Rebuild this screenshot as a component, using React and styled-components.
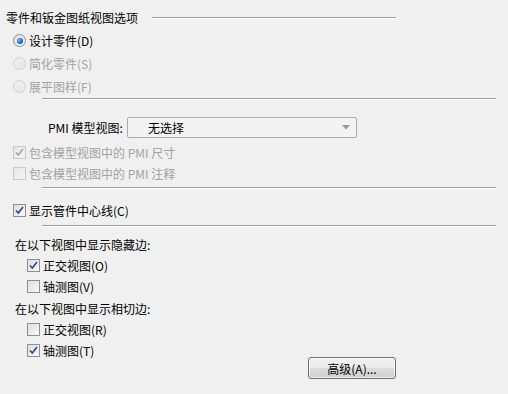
import React from "react";
import styled, { createGlobalStyle } from "styled-components";

const Global = createGlobalStyle`
  html, body {
    margin: 0;
    padding: 0;
    background: #f0f0f0;
  }
  body {
    font-family: "Noto Sans CJK SC", "Noto Sans", sans-serif;
    font-size: 12px;
    color: #000;
  }
`;

const Panel = styled.div`
  width: 508px;
  height: 394px;
  padding-top: 7px;
  box-sizing: border-box;
  display: flex;
  flex-direction: column;
  overflow: hidden;
`;

const TitleRow = styled.div`
  height: 20px;
  display: flex;
  align-items: center;
  padding-left: 6px;
  margin-bottom: 2px;
`;

const TitleLine = styled.div`
  width: 244px;
  margin-left: 14px;
  height: 1px;
  margin-top: 1px;
  background: #a0a0a0;
  border-bottom: 1px solid #fff;
`;

const Separator = styled.div`
  height: 1px;
  margin: ${(p) => p.$mt || 0}px 0 0 42px;
  width: 454px;
  background: #a0a0a0;
  border-bottom: 1px solid #fff;
`;

const Row = styled.label`
  display: flex;
  align-items: center;
  height: ${(p) => p.$h || 21}px;
  margin-top: ${(p) => p.$mt || 0}px;
  padding-left: ${(p) => p.$indent || 13}px;
  color: ${(p) => (p.$disabled ? "#a3a3a3" : "#000")};
  white-space: nowrap;
`;

const Caption = styled.span`
  margin-left: 3px;
`;

const RadioDot = styled.span`
  width: 11px;
  height: 11px;
  border-radius: 50%;
  border: 1px solid ${(p) => (p.$disabled ? "#d2d2d2" : "#8e8f8f")};
  background: ${(p) =>
    p.$disabled
      ? "linear-gradient(135deg, #f0f0f0, #e6e6e6)"
      : "linear-gradient(135deg, #dcdcdc, #f8f8f8)"};
  display: flex;
  align-items: center;
  justify-content: center;
  flex: none;

  &::after {
    content: "";
    display: ${(p) => (p.$checked ? "block" : "none")};
    width: 6px;
    height: 6px;
    border-radius: 50%;
    background: radial-gradient(circle at 35% 35%, #6fb6f5, #1462c4 60%, #0d3f8a);
  }
`;

const Box = styled.span`
  width: 11px;
  height: 11px;
  border: 1px solid ${(p) => (p.$disabled ? "#c9c9c9" : "#8e8f8f")};
  background: ${(p) =>
    p.$disabled
      ? "linear-gradient(135deg, #e6e6e6, #f4f4f4)"
      : "linear-gradient(135deg, #dedede, #f9f9f9)"};
  display: flex;
  align-items: center;
  justify-content: center;
  flex: none;
`;

const Label = styled.div`
  height: 21px;
  display: flex;
  align-items: center;
  padding-left: 15px;
  margin-top: ${(p) => p.$mt || 0}px;
`;

const PmiRow = styled.div`
  display: flex;
  align-items: center;
  height: 21px;
  margin-top: 17px;
  padding-left: 48px;
`;

const PmiLabel = styled.span`
  width: 79px;
`;

const Select = styled.div`
  width: 228px;
  height: 19px;
  border: 1px solid #acacac;
  border-radius: 2px;
  background: #f3f3f3;
  display: flex;
  align-items: center;
  justify-content: space-between;
  padding: 0 6px 0 20px;
  box-sizing: content-box;
  width: 202px;
`;

const Footer = styled.div`
  width: 396px;
  display: flex;
  justify-content: flex-end;
  margin-top: -4px;
`;

const Button = styled.button`
  width: 88px;
  height: 22px;
  border: 1px solid #707070;
  border-radius: 3px;
  background: linear-gradient(#f2f2f2 0%, #ebebeb 50%, #dddddd 51%, #cfcfcf 100%);
  box-shadow: inset 0 0 0 1px rgba(255, 255, 255, 0.6);
  font-family: inherit;
  font-size: 12px;
  color: #000;
  padding: 0;
`;

const Check = ({ disabled }) => (
  <svg width="9" height="9" viewBox="0 0 9 9">
    <path
      d="M1 4.5 L3.3 7 L8 1"
      fill="none"
      stroke={disabled ? "#a8a8a8" : "#2a4a9a"}
      strokeWidth="1.7"
    />
  </svg>
);

const Radio = ({ checked, disabled, children }) => (
  <Row $h={23} $disabled={disabled}>
    <RadioDot $checked={checked} $disabled={disabled} />
    <Caption>{children}</Caption>
  </Row>
);

const CheckRow = ({ checked, disabled, indent, mt, children }) => (
  <Row $indent={indent} $mt={mt} $disabled={disabled}>
    <Box $disabled={disabled}>{checked && <Check disabled={disabled} />}</Box>
    <Caption>{children}</Caption>
  </Row>
);

export default function App() {
  return (
    <>
      <Global />
      <Panel>
        <TitleRow>
          零件和钣金图纸视图选项
          <TitleLine />
        </TitleRow>
        <Radio checked>设计零件(D)</Radio>
        <Radio disabled>简化零件(S)</Radio>
        <Radio disabled>展平图样(F)</Radio>
        <Separator />

        <PmiRow>
          <PmiLabel>PMI 模型视图:</PmiLabel>
          <Select>
            <span>无选择</span>
            <svg width="8" height="5" viewBox="0 0 8 5">
              <path d="M0 0 H8 L4 4.5 Z" fill="#9a9a9a" />
            </svg>
          </Select>
        </PmiRow>
        <CheckRow checked disabled mt={4}>
          包含模型视图中的 PMI 尺寸
        </CheckRow>
        <CheckRow disabled>包含模型视图中的 PMI 注释</CheckRow>
        <Separator $mt={3} />

        <CheckRow checked mt={11}>
          显示管件中心线(C)
        </CheckRow>
        <Separator $mt={4} />

        <Label $mt={7}>在以下视图中显示隐藏边:</Label>
        <CheckRow checked indent={27}>
          正交视图(O)
        </CheckRow>
        <CheckRow indent={27}>轴测图(V)</CheckRow>
        <Label $mt={1}>在以下视图中显示相切边:</Label>
        <CheckRow indent={27}>正交视图(R)</CheckRow>
        <CheckRow checked indent={27}>
          轴测图(T)
        </CheckRow>
        <Footer>
          <Button>高级(A)...</Button>
        </Footer>
      </Panel>
    </>
  );
}
